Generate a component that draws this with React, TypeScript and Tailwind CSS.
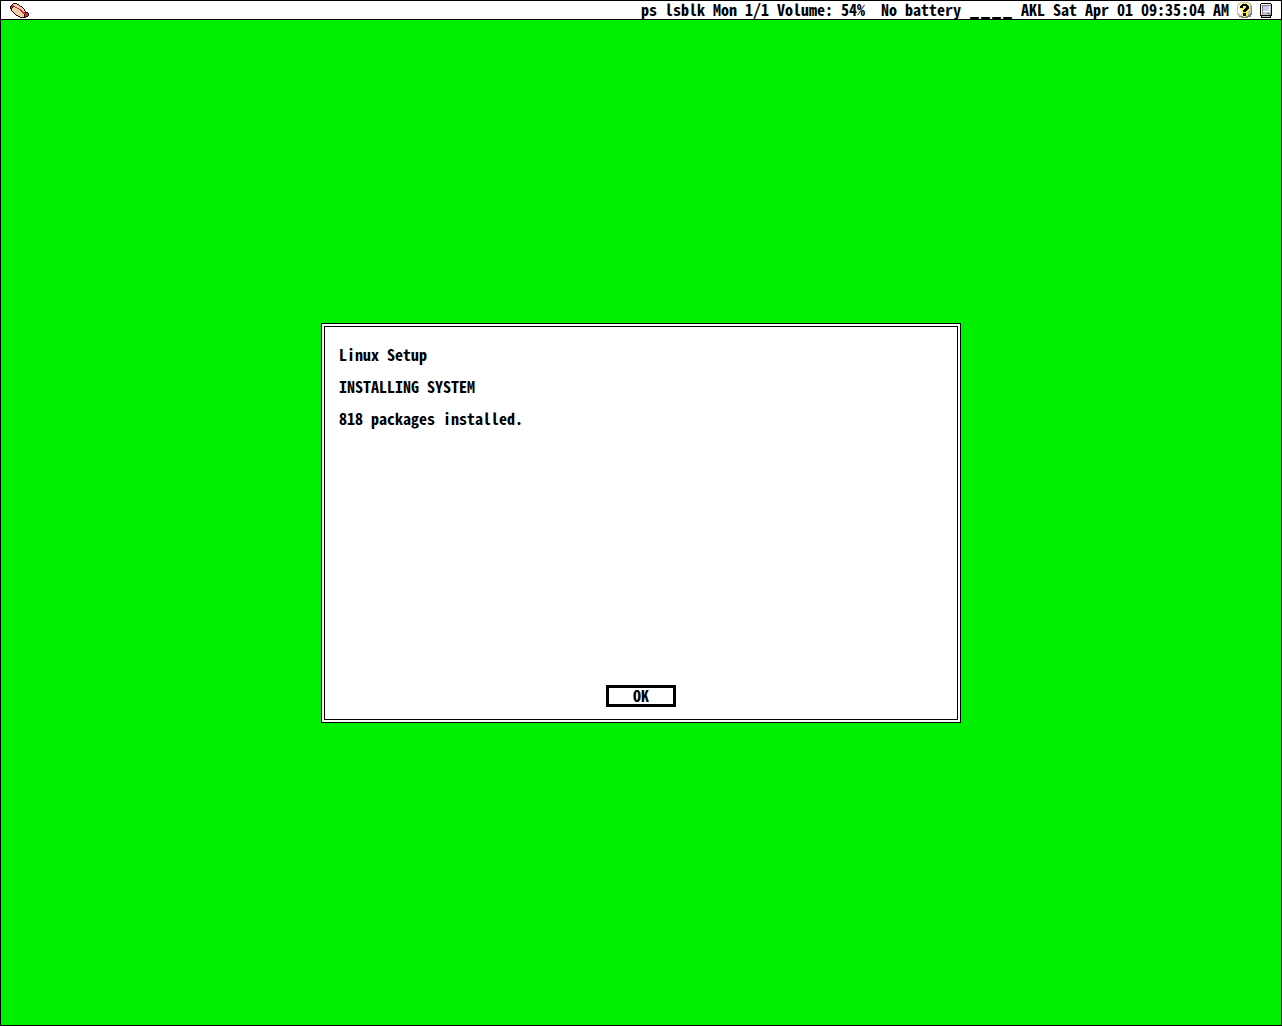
import type { ReactNode } from "react";

const HOTDOG = [
  "...KKKK............",
  "..KBBBBKK..........",
  ".KRRBBBBBK.........",
  "KRRKRBBBBBKK.......",
  "KRKBBRRBBBBBK......",
  "KKBBBBBRRBBBBK.....",
  ".KBBBBBBBRRBBBK....",
  ".KBBBBBBBBRRBBK....",
  "..KBBBBBBBBRRBBK...",
  "...KBBBBBBBBRRRKKK.",
  "....KBBBBBBBBRRRRRK",
  ".....KBBBBBBBBKRRRK",
  "......KKBBBBBBKRRRK",
  "........KKBBBBKRKK.",
  "..........KKKKKK...",
];

const HELP = [
  "...ggggggggg...",
  ".ggwwYYYYYwwgg.",
  ".gwYYKKKKKYYgg.",
  "gwYYKKKKKKKYYgg",
  "gwYKKKYYYKKKYgD",
  "gwYKKKYYYKKKYgD",
  "gwYYYYYYKKKKYgD",
  "gwwwwYYKKKKYYgD",
  "gwwwwYKKKKYYggD",
  "gwwwwYKKKYYgggD",
  "gwwwwYYYYYggggD",
  "ggwwYYKKKYYggDD",
  "gggwYYKKKYYgDDD",
  ".gggYYKKKYYDDD.",
  "..DDDDYYYDDDDD.",
  "....DDDDDDD....",
];

const COMPUTER = [
  ".KKKKKKKKKK.",
  "KwwwwwwwwwgK",
  "KwDDDDDDDDgK",
  "KwDBBBBBBwgK",
  "KwDBBBBBBwgK",
  "KwDBBBBBBwgK",
  "KwDBBBBBBwgK",
  "KwDBBBBBBwgK",
  "KwDwwwwwwwgK",
  "KwgggggggggK",
  "KwRggggDDDgK",
  "KwggggggggDK",
  "KKKKKKKKKKKK",
  ".KggggggggK.",
  ".KKKKKKKKKK.",
];

function PixelIcon({ rows, colors, label }: { rows: string[]; colors: Record<string, string>; label: string }) {
  return (
    <svg role="img" aria-label={label} className="shrink-0" width={rows[0].length} height={rows.length} viewBox={`0 0 ${rows[0].length} ${rows.length}`} shapeRendering="crispEdges">
      {rows.flatMap((row, y) =>
        row.split("").map((c, x) => (c === "." ? null : <rect key={`${x}-${y}`} x={x} y={y} width="1" height="1" fill={colors[c]} />)),
      )}
    </svg>
  );
}

function Item({ children }: { children: ReactNode }) {
  return <span className="pb-0.5 whitespace-pre">{children}</span>;
}

const palette = { K: "#000000", w: "#ffffff", g: "#c0c0c0", D: "#808080", Y: "#fff04a", B: "#c8ccff", R: "#d04040" };

export default function App() {
  return (
    <div className="flex min-h-screen flex-col border border-black bg-[#00ee00] font-['Noto_Sans_Mono_CJK_SC','DejaVu_Sans_Mono',monospace] text-[16px] leading-4 font-bold text-black">
      <header className="flex h-[19px] items-center justify-between border-b border-black bg-white px-[9px]">
        <button aria-label="Menu" className="flex">
          <PixelIcon rows={HOTDOG} label="Hot dog" colors={{ K: "#200808", R: "#c8283a", B: "#f2cfa4" }} />
        </button>
        <div className="flex items-center gap-2">
          <Item>ps</Item>
          <Item>lsblk</Item>
          <Item>Mon 1/1</Item>
          <Item>Volume: 54% </Item>
          <Item>No battery</Item>
          <span className="flex w-11 justify-between pb-2 text-[22px] leading-4">
            <span>_</span>
            <span>_</span>
            <span>_</span>
            <span>_</span>
          </span>
          <Item>AKL</Item>
          <Item>Sat Apr 01 09:35:04 AM</Item>
          <PixelIcon rows={HELP} label="Help" colors={palette} />
          <PixelIcon rows={COMPUTER} label="Computer" colors={palette} />
        </div>
      </header>
      <main className="flex grow items-center justify-center">
        <section role="dialog" aria-label="Linux Setup" className="h-[400px] w-1/2 border border-black bg-white p-0.5">
          <div className="flex h-full flex-col items-center justify-between border border-black px-3.5 pt-[19px] pb-3">
            <div className="flex w-full flex-col gap-4">
              <h1>Linux Setup</h1>
              <p>INSTALLING SYSTEM</p>
              <p>818 packages installed.</p>
            </div>
            <button className="h-[22px] w-[70px] border-3 border-black bg-white pb-0.5 leading-3">OK</button>
          </div>
        </section>
      </main>
    </div>
  );
}
